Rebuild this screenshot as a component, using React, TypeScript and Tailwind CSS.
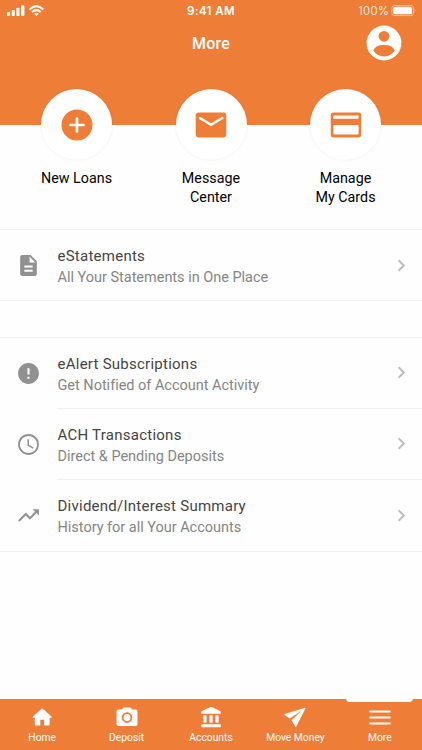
const shortcuts = [
  { lines: ["New Loans"], icon: <PlusIcon /> },
  { lines: ["Message", "Center"], icon: <MailIcon /> },
  { lines: ["Manage", "My Cards"], icon: <CardIcon /> },
];

const activity = [
  {
    title: "eAlert Subscriptions",
    detail: "Get Notified of Account Activity",
    path: "M12 2C6.48 2 2 6.48 2 12s4.48 10 10 10 10-4.48 10-10S17.52 2 12 2zm1 15h-2v-2h2v2zm0-4h-2V7h2v6z",
  },
  {
    title: "ACH Transactions",
    detail: "Direct & Pending Deposits",
    path: "M11.99 2C6.47 2 2 6.48 2 12s4.47 10 9.99 10C17.52 22 22 17.52 22 12S17.52 2 11.99 2zM12 20.2c-4.53 0-8.2-3.67-8.2-8.2S7.47 3.8 12 3.8s8.2 3.67 8.2 8.2-3.67 8.2-8.2 8.2zm.5-13.2H11v6l5.05 3.05.75-1.23-4.3-2.57z",
  },
  {
    title: "Dividend/Interest Summary",
    detail: "History for all Your Accounts",
    path: "M16 6l2.29 2.29-4.88 4.88-4-4L2 16.59 3.41 18l6-6 4 4 6.3-6.29L22 12V6z",
  },
];

const tabs = [
  { label: "Home", icon: <HomeIcon /> },
  { label: "Deposit", icon: <CameraIcon /> },
  { label: "Accounts", icon: <BankIcon /> },
  { label: "Move Money", icon: <PlaneIcon /> },
  { label: "More", icon: <MenuIcon />, active: true },
];

function PlusIcon() {
  return (
    <svg viewBox="0 0 32 32" className="h-8 w-8">
      <circle cx="16" cy="16" r="15.5" fill="#ee7d37" />
      <path d="M16 9.5v13M9.5 16h13" stroke="#fff" strokeWidth="2.7" strokeLinecap="round" />
    </svg>
  );
}

function MailIcon() {
  return (
    <svg viewBox="0 0 32 32" className="h-8 w-8" fill="none">
      <rect x="0.7" y="3.6" width="30.6" height="24.8" rx="2.8" fill="#ee7d37" />
      <path d="M4.8 9L16 15.8 27.2 9" stroke="#fff" strokeWidth="2.5" strokeLinecap="round" />
    </svg>
  );
}

function CardIcon() {
  return (
    <svg viewBox="0 0 32 32" className="h-8 w-8">
      <rect x="0.7" y="3.6" width="30.6" height="24.8" rx="2.8" fill="#ee7d37" />
      <rect x="3.4" y="6.6" width="25.2" height="3.1" rx="0.6" fill="#fff" />
      <rect x="3.4" y="16" width="25.2" height="9.4" rx="1" fill="#fff" />
    </svg>
  );
}

function HomeIcon() {
  return (
    <svg viewBox="0 0 24 24" className="h-6 w-6" fill="currentColor">
      <path d="M10.3 20.6v-5.8h3.8v5.8h4.3q1.2 0 1.2-1.2v-6.7h1.6q1.2 0 .4-.9l-8.7-8q-.7-.6-1.4 0L2.8 11.8q-.8.9.4.9h1.6v6.7q0 1.2 1.2 1.2z" />
    </svg>
  );
}

function CameraIcon() {
  return (
    <svg viewBox="0 0 24 24" className="h-6 w-6">
      <path
        d="M9 2.6h6q.6 0 1 .4l1.3 1.6h3.2q2 0 2 2v12.6q0 1.8-2 1.8h-17q-2 0-2-1.8V6.6q0-2 2-2h3.2L8 3q.4-.4 1-.4z"
        fill="currentColor"
      />
      <circle cx="12" cy="12.6" r="4.4" fill="none" stroke="#ee7d37" strokeWidth="1.8" />
    </svg>
  );
}

function BankIcon() {
  return (
    <svg viewBox="0 0 24 24" className="h-6 w-6" fill="currentColor">
      <path d="M11.3 2.1q.7-.4 1.4 0l8.3 4q.8.4.8 1.2v1.4H2.2V7.3q0-.8.8-1.2z" />
      <rect x="4.4" y="10.3" width="3.2" height="7.4" rx="1" />
      <rect x="10.4" y="10.3" width="3.2" height="7.4" rx="1" />
      <rect x="16.4" y="10.3" width="3.2" height="7.4" rx="1" />
      <rect x="2.2" y="19.2" width="19.6" height="3" rx="0.8" />
    </svg>
  );
}

function PlaneIcon() {
  return (
    <svg viewBox="0 0 24 24" className="h-6 w-6" fill="currentColor">
      <path d="M22.6 3.2q.2-.7-.5-.5L1.6 9.1q-.8.3-.1.9l5.2 3.6L19 5.6 8.5 15.3l3.9 6.4q.5.6.9-.1z" />
    </svg>
  );
}

function MenuIcon() {
  return (
    <svg viewBox="0 0 24 24" className="h-6 w-6" stroke="currentColor" strokeWidth="2.2" strokeLinecap="round">
      <path d="M2.3 6.5h19.4M2.3 12.5h19.4M2.3 18.5h19.4" />
    </svg>
  );
}

function StatusBar() {
  return (
    <div className="grid h-[22px] grid-cols-3 items-center px-[7px] text-[11.5px] font-['Inter',sans-serif]">
      <svg viewBox="0 0 38 12" className="h-3 w-[38px]" fill="currentColor">
        <rect x="0" y="7" width="3.1" height="4" rx="0.9" />
        <rect x="4.7" y="5" width="3.1" height="6" rx="0.9" />
        <rect x="9.4" y="2.7" width="3.1" height="8.3" rx="0.9" />
        <rect x="14.1" y="0.2" width="3.3" height="10.8" rx="0.9" />
        <g fill="none" stroke="currentColor" strokeWidth="2.1">
          <path d="M22.5 4.4Q29.4-2 36.3 4.4" />
          <path d="M25.1 7Q29.4 3.3 33.7 7" />
        </g>
        <path d="M29.4 11l-2.3-2.3q2.3-1.9 4.6 0z" />
      </svg>
      <span className="pt-0.5 text-center font-semibold tracking-[0.4px]">9:41 AM</span>
      <div className="flex items-center justify-end gap-[2px]">
        <span className="pt-0.5 font-light tracking-[0.3px]">100%</span>
        <svg viewBox="0 0 26 12" className="-mr-[2px] h-3 w-[26px]">
          <rect x="0.9" y="0.4" width="21.6" height="10.2" rx="2.8" fill="none" stroke="#fff" strokeOpacity="0.5" />
          <rect x="2.3" y="1.8" width="18.8" height="7.4" rx="1.6" fill="#fff" />
          <path d="M23.8 3.7q1.5 1.8 0 3.6z" fill="#fff" fillOpacity="0.6" />
        </svg>
      </div>
    </div>
  );
}

function Header() {
  return (
    <header className="h-[125px] shrink-0 bg-[#ee7d37] text-white">
      <StatusBar />
      <div className="grid h-[42px] grid-cols-3 items-center px-5">
        <span />
        <h1 className="pt-0.5 text-center text-[16px] font-medium tracking-[0.2px]">More</h1>
        <svg viewBox="0 0 36 36" className="h-9 w-9 justify-self-end">
          <circle cx="18" cy="18" r="17.4" fill="#fff" />
          <circle cx="18" cy="11.3" r="5.4" fill="#ee7d37" />
          <path d="M7.4 25.6Q8.7 20 18 20t10.6 5.6Q25.4 31.4 18 31.4T7.4 25.6z" fill="#ee7d37" />
        </svg>
      </div>
    </header>
  );
}

function ListRow({ title, detail, path, border }: { title: string; detail: string; path: string; border?: boolean }) {
  return (
    <li className="flex h-[71px]">
      <div className="flex w-[57px] items-center justify-center">
        <svg viewBox="0 0 24 24" className="h-[25px] w-[25px]" fill="#919191">
          <path d={path} />
        </svg>
      </div>
      <div className={`flex flex-1 items-center justify-between pr-4 ${border ? "border-b border-[#f0f0f0]" : ""}`}>
        <div className="pt-[3px] pl-[0.5px] text-[15px] leading-[22px] tracking-[0.25px]">
          <p className="text-[#444]">{title}</p>
          <p className="text-[14.5px] tracking-[-0.02px] text-[#858585]">{detail}</p>
        </div>
        <svg viewBox="0 0 10 14" className="h-[14px] w-[10px]" fill="none" stroke="#bdbdbd" strokeWidth="2">
          <path d="M2.6 1.3L7.8 6.5l-5.2 5.2" />
        </svg>
      </div>
    </li>
  );
}

export default function App() {
  return (
    <div className="flex h-[750px] w-[422px] flex-col overflow-hidden bg-[#fefefe] font-['Roboto',sans-serif]">
      <Header />

      <nav className="-mt-9 flex h-[140px] shrink-0 justify-center">
        {shortcuts.map((s) => (
          <div key={s.lines[0]} className="flex w-[134.5px] flex-col items-center">
            <div className="flex h-[71px] w-[71px] items-center justify-center rounded-full bg-white shadow-[0_0_3px_rgba(0,0,0,0.07)]">
              {s.icon}
            </div>
            <div className="mt-[9px] text-center text-[14.3px] leading-[18.7px] tracking-[0.02px] text-black">
              {s.lines.map((line) => (
                <p key={line}>{line}</p>
              ))}
            </div>
          </div>
        ))}
      </nav>

      <ul className="h-[72px] shrink-0 border-y border-[#f0f0f0]">
        <ListRow
          title="eStatements"
          detail="All Your Statements in One Place"
          path="M14 2H6c-1.1 0-2 .9-2 2v16c0 1.1.9 2 2 2h12c1.1 0 2-.9 2-2V8l-6-6zm2 16H8v-2h8v2zm0-4H8v-2h8v2zm-3-5V3.5L18.5 9H13z"
        />
      </ul>

      <ul className="mt-9 border-y border-[#f0f0f0]">
        {activity.map((item, i) => (
          <ListRow key={item.title} {...item} border={i < activity.length - 1} />
        ))}
      </ul>

      <footer className="mt-auto flex h-[51px] bg-[#ee7d37] text-white">
        {tabs.map((tab) => (
          <div key={tab.label} className="relative flex flex-1 flex-col items-center pt-[6px]">
            {tab.active ? <div className="absolute -top-px h-1 w-[67px] rounded-b bg-white" /> : null}
            {tab.icon}
            <span className="mt-px text-[10.3px] leading-[15px]">{tab.label}</span>
          </div>
        ))}
      </footer>
    </div>
  );
}
